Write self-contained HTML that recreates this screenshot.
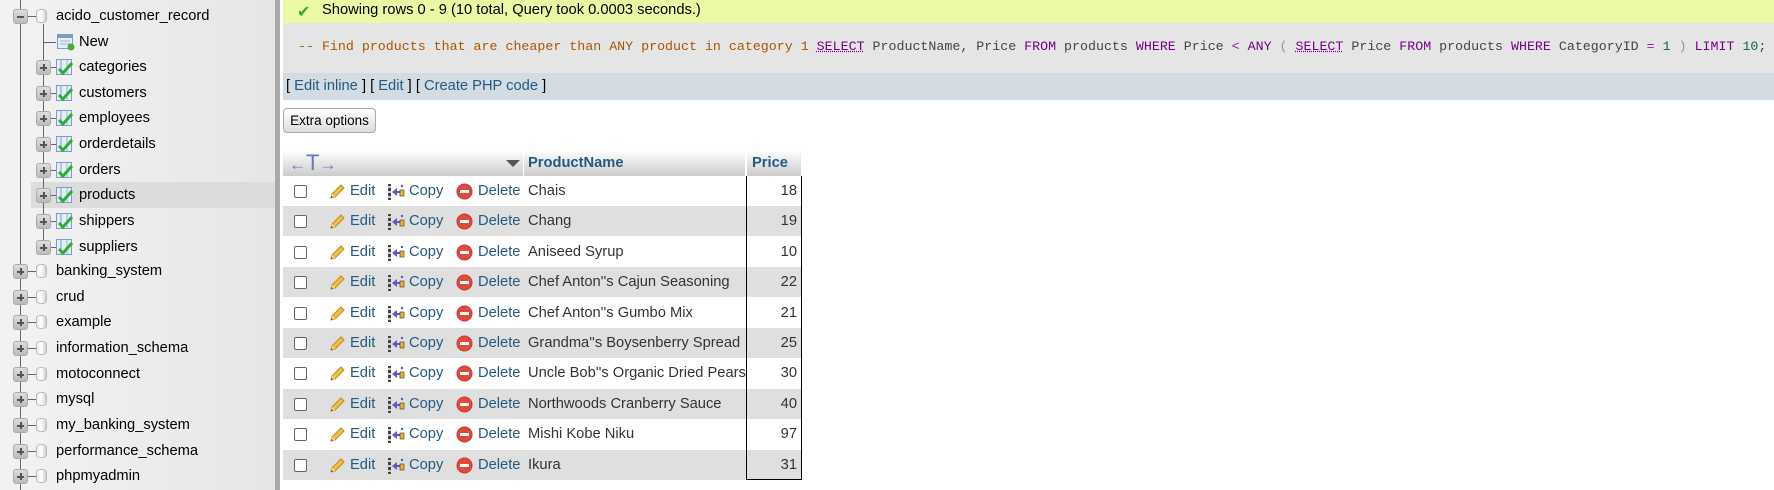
<!DOCTYPE html>
<html><head><meta charset="utf-8">
<style>
*{margin:0;padding:0;box-sizing:border-box}
body{width:1774px;height:490px;overflow:hidden;background:#fff;font-family:"Liberation Sans",Arial,sans-serif;font-size:14.7px;color:#000;position:relative}
.abs{position:absolute}
#side{left:0;top:0;width:275px;height:490px;background:linear-gradient(to right,#f3f3f3,#e6e6e6)}
#border{left:275px;top:0;width:5px;height:490px;background:#aaa}
.vl{position:absolute;background:#666;width:1px}
.hl{position:absolute;background:#666;height:1px}
.exp{position:absolute;width:15px;height:15px;border:1px solid #aaa;border-radius:3px;background:linear-gradient(#ddd,#bbb);}
.exp::before{content:"";position:absolute;left:3px;top:6px;width:7px;height:2px;background:#555}
.exp.p::after{content:"";position:absolute;left:6px;top:3px;width:2px;height:7px;background:#555}
.db{position:absolute;width:11px;height:14px;border:1px solid #bbb;border-radius:5px/3px;background:linear-gradient(to right,#eee,#fff,#ccc)}
.lbl{position:absolute;font-size:14.7px;color:#000;white-space:nowrap;line-height:18px}
#succ{left:283px;top:0;width:1491px;height:23px;background:#ebf8a4}
#sql{left:283px;top:23px;width:1491px;height:50px;background:#e5e5e5}
#sqlt{left:298px;top:38px;font-family:"Liberation Mono",monospace;font-size:13.3px;white-space:pre;color:#444;line-height:18px}
.c{color:#aa5500}.k{color:#770088}.o{color:#981ab1}.n{color:#116644}.b{color:#997}
.u{text-decoration:underline dotted}
#links{left:283px;top:73px;width:1491px;height:27px;background:#d3dce3}
a{color:#235a81;text-decoration:none}
#btn{left:283px;top:108px;width:93px;height:25px;border:1px solid #aaa;border-radius:4px;background:linear-gradient(#fff,#ddd);font-size:13.5px;line-height:23px;text-align:center}
.hd{position:absolute;top:150px;height:26px;background:linear-gradient(#fff,#ccc);font-weight:bold;color:#235a81;line-height:26px}
.row{position:absolute;left:283px;width:518px;height:30px}
.row span,.row svg{position:absolute;top:6px;line-height:18px;white-space:nowrap}
.cb{position:absolute;left:11px;top:9px;width:13px;height:13px;border:1px solid #666;border-radius:2px;background:#fff}
</style></head><body>
<div id="side" class="abs"></div>
<div id="border" class="abs"></div>
<div class="abs" style="left:31px;top:182px;width:244px;height:26px;background:#dcdcdc"></div>
<div class="vl" style="left:20px;top:0;height:490px"></div>
<div class="vl" style="left:43px;top:24px;height:222px"></div>

<div class="exp" style="left:13px;top:9px"></div><div class="hl" style="left:28px;top:16px;width:8px"></div>
<div class="db" style="left:36px;top:9px"></div><div class="lbl" style="left:56px;top:7px">acido_customer_record</div>
<div class="hl" style="left:43px;top:42px;width:13px"></div>
<svg class="abs" style="left:57px;top:34px" width="18" height="17"><rect x="0.5" y="0.5" width="15" height="14" fill="#e4eefa" stroke="#7a9cc6"/><rect x="1" y="1" width="14" height="3" fill="#7a9cc6"/><line x1="3" y1="7" x2="13" y2="7" stroke="#9bb"/><line x1="3" y1="10" x2="13" y2="10" stroke="#9bb"/><circle cx="14" cy="13" r="3.5" fill="#4a4"/></svg>
<div class="lbl" style="left:79px;top:33px">New</div>

<div id="tbls"></div>

<div id="succ" class="abs"><span class="abs" style="left:14px;top:2px;color:#3a3;font-size:16px">&#10004;</span><span class="abs" style="left:39px;top:2px;white-space:nowrap">Showing rows 0 - 9 (10 total, Query took 0.0003 seconds.)</span></div>
<div id="sql" class="abs"></div>
<div id="sqlt" class="abs"><span class="c">-- Find products that are cheaper than ANY product in category 1</span> <span class="k u">SELECT</span> ProductName, Price <span class="k">FROM</span> products <span class="k">WHERE</span> Price <span class="o">&lt;</span> <span class="k">ANY</span> <span class="b">(</span> <span class="k u">SELECT</span> Price <span class="k">FROM</span> products <span class="k">WHERE</span> CategoryID <span class="o">=</span> <span class="n">1</span> <span class="b">)</span> <span class="k">LIMIT</span> <span class="n">10</span>;</div>
<div id="links" class="abs"><span class="abs" style="left:3px;top:5px;white-space:nowrap">[ <a>Edit inline</a> ] [ <a>Edit</a> ] [ <a>Create PHP code</a> ]</span></div>
<div id="btn" class="abs">Extra options</div>

<div class="hd" style="left:283px;width:240px;font-weight:normal;color:#67b;font-size:17px;padding-left:6px">&larr;<span style="font-size:22px">T</span>&rarr;<span style="position:absolute;left:223px;top:10px;width:0;height:0;border-left:7px solid transparent;border-right:7px solid transparent;border-top:7px solid #555"></span></div>
<div class="hd" style="left:524px;width:221px;padding-left:4px">ProductName</div>
<div class="hd" style="left:747px;width:54px;padding-left:5px">Price</div>

<div id="rows"></div>
<div class="abs" style="left:746px;top:176px;width:56px;height:304px;border:1px solid #000;border-top:none"></div>

<script>
var tbIcon='<svg width="18" height="17"><rect x="0.5" y="0.5" width="15" height="15" fill="#e4eefa" stroke="#7a9cc6"/><line x1="5" y1="1" x2="5" y2="15" stroke="#7a9cc6"/><line x1="11" y1="1" x2="11" y2="15" stroke="#9bc"/><path d="M3 10 L7 14 L16 4" fill="none" stroke="#3a3" stroke-width="3"/></svg>';
var t=["categories","customers","employees","orderdetails","orders","products","shippers","suppliers"],h="";
t.forEach(function(n,i){var y=67+25.65*i;
h+='<div class="exp p" style="left:36px;top:'+(y-7)+'px"></div><div class="hl" style="left:51px;top:'+y+'px;width:5px"></div><div class="abs" style="left:56px;top:'+(y-8)+'px">'+tbIcon+'</div><div class="lbl" style="left:79px;top:'+(y-9)+'px">'+n+'</div>';});
var d=["banking_system","crud","example","information_schema","motoconnect","mysql","my_banking_system","performance_schema","phpmyadmin"];
d.forEach(function(n,i){var y=271+25.65*i;
h+='<div class="exp p" style="left:13px;top:'+(y-7)+'px"></div><div class="hl" style="left:28px;top:'+y+'px;width:8px"></div><div class="db" style="left:36px;top:'+(y-7)+'px"></div><div class="lbl" style="left:56px;top:'+(y-9)+'px">'+n+'</div>';});
document.getElementById("tbls").innerHTML=h;
var pencil='<svg style="left:45px;top:7px" width="18" height="18"><path d="M3 15 L4 11 L13 2 L16 5 L7 14 Z" fill="#f0c040" stroke="#c08a20"/><path d="M3 15 L4 11 L7 14 Z" fill="#f6e0b0"/><path d="M3 15 L3.6 13 L5 14.4 Z" fill="#333"/></svg>';
var copy='<svg style="left:104px;top:7px" width="18" height="18"><rect x="1" y="1" width="3" height="16" fill="#444"/><rect x="1" y="3" width="3" height="2" fill="#ccc"/><rect x="1" y="8" width="3" height="2" fill="#ccc"/><rect x="1" y="13" width="3" height="2" fill="#ccc"/><path d="M5 9 L10 5 L10 8 L13 8 L13 10 L10 10 L10 13 Z" fill="#5a5ad0"/><rect x="13" y="7" width="4" height="6" fill="#e8b820" stroke="#333" stroke-width="0.6"/><circle cx="15" cy="3" r="1.2" fill="#55c"/></svg>';
var del='<svg style="left:173px;top:7px" width="17" height="17"><circle cx="8.5" cy="8.5" r="7.5" fill="#e04a3a" stroke="#c33"/><rect x="4" y="7" width="9" height="3" fill="#fff"/></svg>';
var r=[["Chais",18],["Chang",19],["Aniseed Syrup",10],["Chef Anton''s Cajun Seasoning",22],["Chef Anton''s Gumbo Mix",21],["Grandma''s Boysenberry Spread",25],["Uncle Bob''s Organic Dried Pears",30],["Northwoods Cranberry Sauce",40],["Mishi Kobe Niku",97],["Ikura",31]],s="";
r.forEach(function(x,i){var y=176+30.4*i;
s+='<div class="row" style="top:'+y+'px;background:'+(i%2?'#dfdfdf':'#fff')+'"><div class="cb"></div>'+
pencil+'<span style="left:67px"><a>Edit</a></span>'+copy+'<span style="left:126px"><a>Copy</a></span>'+del+'<span style="left:195px"><a>Delete</a></span>'+
'<span style="left:245px;color:#333">'+x[0]+'</span><span style="right:4px;color:#333">'+x[1]+'</span></div>';});
document.getElementById("rows").innerHTML=s;
</script>
</body></html>
